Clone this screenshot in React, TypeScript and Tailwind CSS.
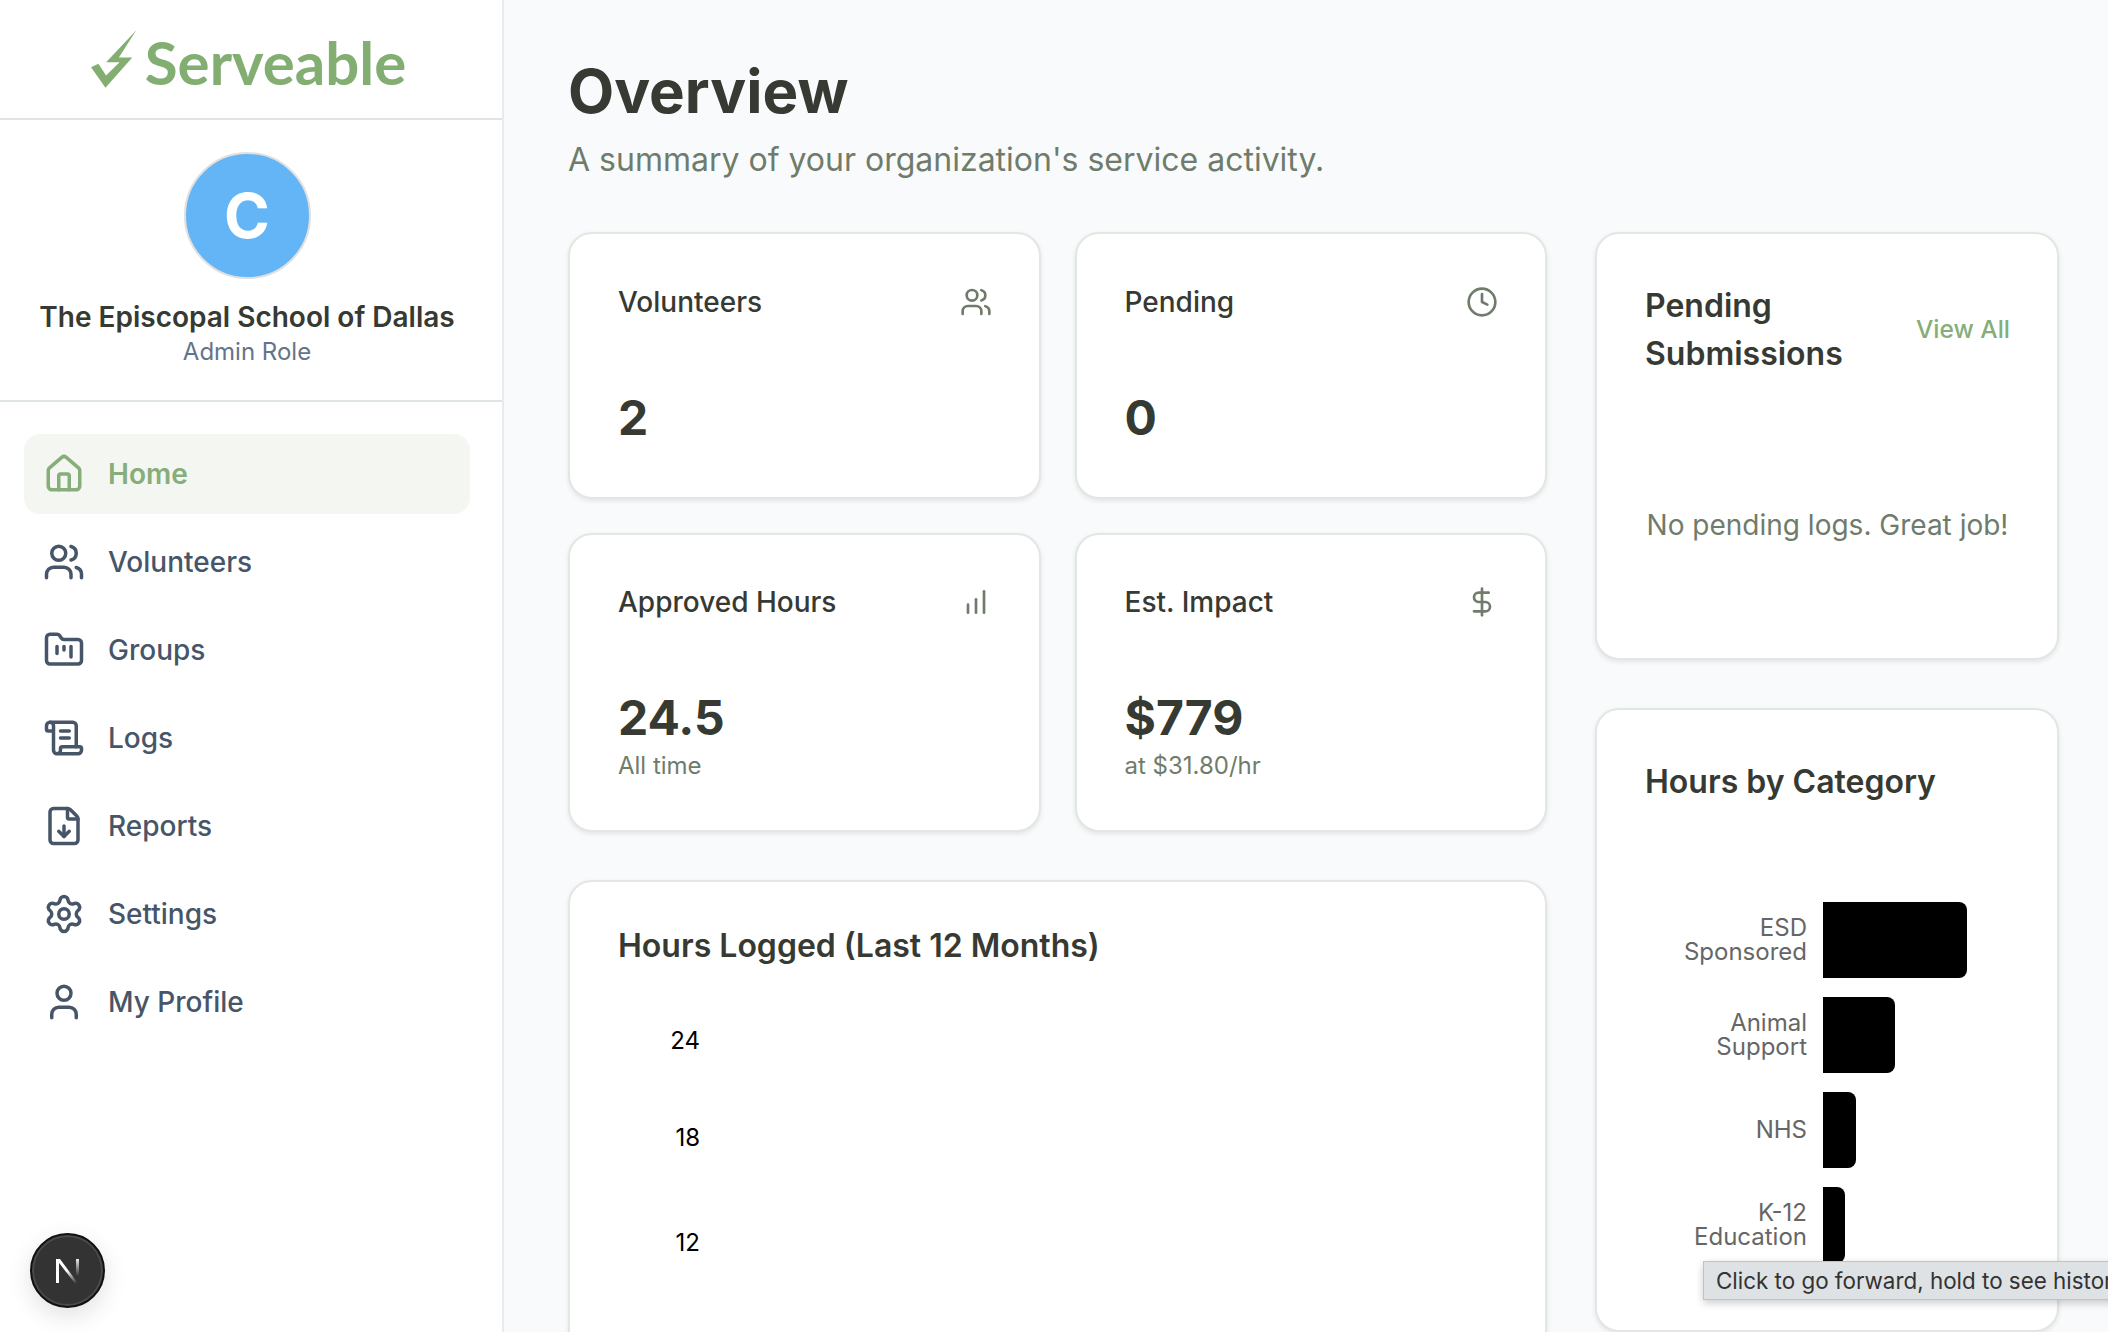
import { Users, Clock, DollarSign, House, FolderKanban, ScrollText, FileDown, Settings, User } from "lucide-react";
import type { ReactNode } from "react";

const nav = [
  { label: "Volunteers", Icon: Users },
  { label: "Groups", Icon: FolderKanban },
  { label: "Logs", Icon: ScrollText },
  { label: "Reports", Icon: FileDown },
  { label: "Settings", Icon: Settings },
  { label: "My Profile", Icon: User },
];

function Card({ className, children }: { className: string; children: ReactNode }) {
  return (
    <div className={"rounded-[24px] border-2 border-[#e3e7e3] bg-white shadow-[0_2px_5px_rgba(0,0,0,0.09)] " + className}>
      {children}
    </div>
  );
}

function Stat({ label, value, sub, icon, className }: { label: string; value: string; sub?: string; icon: ReactNode; className: string }) {
  return (
    <Card className={"pr-[47px] pl-[48px] " + className}>
      <div className="flex h-[42px] items-center justify-between">
        <span className="text-[28px] font-medium text-[#363a33]">{label}</span>
        {icon}
      </div>
      <div className="mt-[65px] h-[60px] text-[48px] leading-[60px] font-bold text-[#363a33]">{value}</div>
      {sub && <div className="mt-[1px] text-[24px] leading-[34px] text-[#6f7c6b]">{sub}</div>}
    </Card>
  );
}

function BarsIcon() {
  return (
    <svg width="32" height="32" viewBox="0 0 24 24" fill="none" stroke="#6f7c6b" strokeWidth="2" strokeLinecap="round">
      <line x1="6" y1="20" x2="6" y2="14" />
      <line x1="12" y1="20" x2="12" y2="10" />
      <line x1="18" y1="20" x2="18" y2="4" />
    </svg>
  );
}

const cats = [
  { label: ["ESD", "Sponsored"], bar: "w-[144px]" },
  { label: ["Animal", "Support"], bar: "w-[72px]" },
  { label: ["NHS"], bar: "w-[33px]" },
  { label: ["K-12", "Education"], bar: "w-[22px]" },
];

export default function App() {
  return (
    <div className="relative flex h-[1332px] overflow-hidden bg-[#f9fafb] font-['Inter',sans-serif]">
      <aside className="flex w-[504px] shrink-0 flex-col border-r-2 border-[#e9ecef] bg-white">
        <div className="flex h-[120px] items-center justify-center gap-[8px] border-b-2 border-[#dfe5df] pt-[6px] pr-[6px]">
          <svg width="47" height="62" viewBox="60 40 140 185" className="mb-[6px]">
            <polygon fill="#82ae72" points="198,47 108,142 148,142 108,182 85,147 63,157 106,218 186,128 146,128" />
          </svg>
          <span className="font-['Lato',sans-serif] text-[60px] leading-none font-bold text-[#82ae72]">Serveable</span>
        </div>
        <div className="flex h-[282px] flex-col items-center border-b-2 border-[#dfe5df] pt-[32px] pr-[8px]">
          <div className="flex h-[127px] w-[127px] items-center justify-center rounded-full border-2 border-[#e0e0e0] bg-[#64b5f6] text-[62px] font-bold text-white">C</div>
          <div className="mt-[19px] text-[28px] leading-[38px] font-semibold text-[#363a33]">The Episcopal School of Dallas</div>
          <div className="text-[24px] leading-[32px] text-[#64748b]">Admin Role</div>
        </div>
        <nav className="flex flex-col gap-[8px] pt-[32px] pr-[32px] pl-[24px]">
          <div className="flex h-[80px] items-center gap-[23px] rounded-[16px] bg-[#f3f6f1] pl-[19px] text-[28px] font-semibold text-[#86ad7a]">
            <House size={42} strokeWidth={2} />
            Home
          </div>
          {nav.map(({ label, Icon }) => (
            <div key={label} className="flex h-[80px] items-center gap-[23px] pl-[19px] text-[28px] font-medium text-[#475569]">
              <Icon size={42} strokeWidth={2} />
              {label}
            </div>
          ))}
        </nav>
      </aside>

      <main className="min-w-0 flex-1 pt-[51px] pr-[49px] pl-[64px]">
        <h1 className="text-[60px] leading-[80px] font-bold text-[#363a33]">Overview</h1>
        <p className="mt-[9px] text-[32px] leading-[40px] text-[#6f7c6b]">A summary of your organization's service activity.</p>
        <div className="mt-[52px] flex gap-[48px]">
          <div className="flex w-[979px] shrink-0 flex-col gap-[48px]">
            <div className="grid grid-cols-2 gap-x-[34px] gap-y-[34px]">
              <Stat className="h-[267px] pt-[47px]" label="Volunteers" value="2" icon={<Users size={32} strokeWidth={2} className="text-[#6f7c6b]" />} />
              <Stat className="h-[267px] pt-[47px]" label="Pending" value="0" icon={<Clock size={32} strokeWidth={2} className="text-[#6f7c6b]" />} />
              <Stat className="h-[299px] pt-[46px]" label="Approved Hours" value="24.5" sub="All time" icon={<BarsIcon />} />
              <Stat className="h-[299px] pt-[46px]" label="Est. Impact" value="$779" sub="at $31.80/hr" icon={<DollarSign size={32} strokeWidth={2} className="text-[#6f7c6b]" />} />
            </div>
            <Card className="h-[600px] px-[48px] pt-[40px]">
              <h2 className="text-[32px] leading-[48px] font-semibold text-[#363a33]">Hours Logged (Last 12 Months)</h2>
              <div className="mt-[55px] flex w-[82px] flex-col items-end text-[24px] leading-[32px] text-black">
                <span>24</span>
                <span className="mt-[65px]">18</span>
                <span className="mt-[73px]">12</span>
              </div>
            </Card>
          </div>
          <div className="flex w-[464px] shrink-0 flex-col gap-[48px]">
            <Card className="h-[428px] pt-[48px] pr-[47px] pl-[48px]">
              <div className="flex items-center justify-between">
                <h2 className="w-[240px] text-[32px] leading-[48px] font-semibold text-[#363a33]">Pending Submissions</h2>
                <a className="mb-[2px] text-[24.5px] font-medium text-[#86ad7a]">View All</a>
              </div>
              <p className="mt-[125px] text-center text-[28px] leading-[44px] whitespace-nowrap text-[#6f7c6b]">No pending logs. Great job!</p>
            </Card>
            <Card className="h-[624px] px-[48px] pt-[48px]">
              <h2 className="text-[32px] leading-[48px] font-semibold text-[#363a33]">Hours by Category</h2>
              <div className="mt-[96px] flex flex-col gap-[19px]">
                {cats.map((c) => (
                  <div key={c.label[0]} className="flex h-[76px] items-center gap-[16px]">
                    <div className="w-[162px] shrink-0 text-right text-[24px] leading-[24px] text-[#666666]">
                      {c.label.map((l) => (
                        <div key={l}>{l}</div>
                      ))}
                    </div>
                    <div className={"h-full rounded-r-[8px] bg-black " + c.bar} />
                  </div>
                ))}
              </div>
            </Card>
          </div>
        </div>
      </main>

      <div className="absolute top-[1261px] left-[1703px] flex h-[39px] items-center border border-[#bfc2c6] bg-[#dfe2e5] pr-[12px] pl-[12px] text-[22.4px] whitespace-nowrap text-[#333333] shadow-[0_3px_8px_rgba(0,0,0,0.2)]">
        Click to go forward, hold to see history
      </div>

      <div className="absolute top-[1233px] left-[30px] flex h-[75px] w-[75px] items-center justify-center rounded-full border-2 border-[#111111] bg-[#333333] shadow-[0_0_0_2px_#4a4a4a_inset,0_8px_24px_rgba(0,0,0,0.12)]">
        <svg width="28" height="30" viewBox="0 0 28 30">
          <defs>
            <linearGradient id="nf" x1="0" y1="0" x2="0.7" y2="1">
              <stop offset="0.5" stopColor="#ffffff" />
              <stop offset="1" stopColor="#ffffff" stopOpacity="0" />
            </linearGradient>
            <linearGradient id="nr" x1="0" y1="0" x2="0" y2="1">
              <stop offset="0" stopColor="#ffffff" stopOpacity="0.9" />
              <stop offset="1" stopColor="#ffffff" stopOpacity="0" />
            </linearGradient>
          </defs>
          <rect x="2" y="3" width="3" height="24" fill="#ffffff" />
          <polygon points="2,3 6,3 26,30 23,30" fill="url(#nf)" />
          <rect x="22" y="3" width="3" height="17" fill="url(#nr)" />
        </svg>
      </div>
    </div>
  );
}
